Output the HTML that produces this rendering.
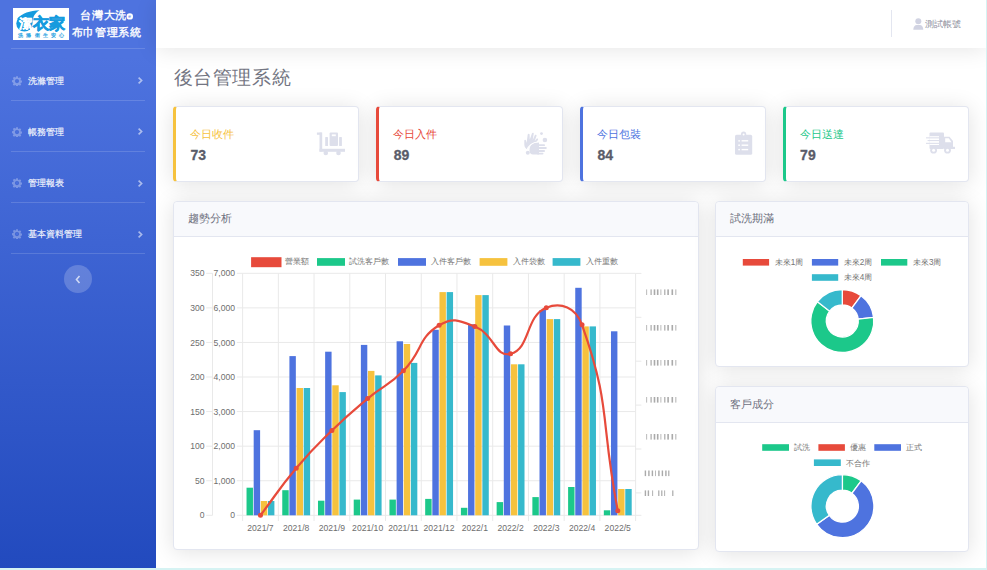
<!DOCTYPE html>
<html><head><meta charset="utf-8">
<style>
*{box-sizing:border-box;margin:0;padding:0}
html,body{width:987px;height:570px;overflow:hidden}
body{position:relative;background:#fff;font-family:"Liberation Sans",sans-serif;color:#5a5c69}
.abs{position:absolute}
#side{left:0;top:0;width:156px;height:568px;background:linear-gradient(180deg,#4e73df 10%,#224abe 100%)}
.hr{position:absolute;left:10.5px;width:134px;height:1px;background:rgba(255,255,255,.15)}
.mi{position:absolute;left:0;width:156px;height:20px;color:rgba(255,255,255,.85);font-size:9.4px;line-height:20px}
.mi .t{position:absolute;left:28.4px;top:0;-webkit-text-stroke:0.25px rgba(255,255,255,.8)}
.mi svg{position:absolute}
#top{left:156px;top:0;width:830px;height:48px;background:#fff;box-shadow:0 2px 22px 0 rgba(0,0,0,.1)}
.card{position:absolute;background:#fff;border:1px solid #e3e6f0;border-radius:4px;box-shadow:0 2px 22px 0 rgba(0,0,0,.12)}
.stat{top:105.6px;height:76.6px;width:186.4px}
.stat .lab{position:absolute;left:14.3px;top:20px;font-size:11px;line-height:14px}
.stat .num{position:absolute;left:14.5px;top:39.5px;font-size:14px;font-weight:bold;line-height:18px;color:#5a5c69;-webkit-text-stroke:0.3px #5a5c69}
.stat svg{position:absolute}
.ch{position:absolute;left:0;top:0;right:0;height:35.5px;background:#f8f9fc;border-bottom:1px solid #e3e6f0;border-radius:4px 4px 0 0}
.ch span{position:absolute;left:14px;top:9.5px;font-size:11px;line-height:14px;color:#6e707e}
#rb{right:0;top:0;width:1px;height:570px;background:#d6f3f3}
#bb{left:0;bottom:0;width:987px;height:2px;background:#d6f3f3}
svg text{font-family:"Liberation Sans",sans-serif}
.ax{font-size:8.6px;fill:#6e6e6e}
.lg{font-size:8.2px;fill:#747474}
.gb{font-size:7px;fill:#777;letter-spacing:0.4px}
</style></head><body>
<div id="side" class="abs">
  <!-- logo -->
  <div class="abs" style="left:13.2px;top:7.5px;width:55.5px;height:32.3px;background:#fff"></div>
  <svg class="abs" style="left:0;top:0" width="156" height="48" viewBox="0 0 156 48">
    <g fill="#169bde"><circle cx="24.4" cy="23.4" r="8.1"/><path d="M17.2,18.8 C22,13.2 30,10.8 39.5,10.3 C35,13 32.6,17 32.4,23 L24,24 Z"/></g>
    <text x="19" y="28.4" font-size="12.6" font-weight="bold" fill="#fff" stroke="#fff" stroke-width="0.3" style="font-family:'Liberation Sans',sans-serif">潔</text>
    <text x="32.8" y="28.9" font-size="16.4" font-weight="bold" fill="#169bde" stroke="#169bde" stroke-width="0.6" style="font-family:'Liberation Sans',sans-serif" textLength="32.4" lengthAdjust="spacingAndGlyphs">衣家</text>
    <text x="18.4" y="37.3" font-size="4.6" fill="#2aa3e2" stroke="#2aa3e2" stroke-width="0.2" letter-spacing="3.1" style="font-family:'Liberation Sans',sans-serif">洗滌衛生安心</text>
    <text x="80.4 92.0 103.6 115.2" y="18.8" font-size="11.2" fill="#fff" stroke="#fff" stroke-width="0.35" style="font-family:'Liberation Sans',sans-serif" >台灣大洗</text>
    <circle cx="129.8" cy="16.4" r="3.2" fill="#fff"/>
    <text x="128.2" y="18.2" font-size="4.8" fill="#4e73df" style="font-family:'Liberation Sans',sans-serif">e</text>
    <text x="71.6 83.25 94.9 106.55 118.2 129.85" y="36.2" font-size="11.2" fill="#fff" stroke="#fff" stroke-width="0.35" style="font-family:'Liberation Sans',sans-serif" >布巾管理系統</text>
  </svg>
  <div class="hr" style="top:48px"></div>
  <div class="mi" style="top:70.5px"><svg style="left:11.8px;top:5.2px" width="10" height="10" viewBox="0 0 16 16"><path fill="rgba(255,255,255,.3)" d="M8 4.6a3.4 3.4 0 1 0 0 6.8 3.4 3.4 0 0 0 0-6.8zM6.6.5h2.8l.4 2.1 1.2.6 1.8-1.2 2 2-1.2 1.8.5 1.2 2.1.4v2.8l-2.1.4-.5 1.2 1.2 1.8-2 2-1.8-1.2-1.2.5-.4 2.1H6.6l-.4-2.1-1.2-.5-1.8 1.2-2-2 1.2-1.8-.5-1.2L0 9.4V6.6l2.1-.4.5-1.2-1.2-1.8 2-2 1.8 1.2 1.2-.6z"/><circle cx="8" cy="8" r="2.2" fill="#4a6fdc"/></svg><span class="t">洗滌管理</span><svg style="left:136.5px;top:5.8px" width="7" height="9" viewBox="0 0 7 9"><path d="M1.6,1.6 L4.6,4.5 L1.6,7.4" fill="none" stroke="rgba(255,255,255,.55)" stroke-width="1.7"/></svg></div>
  <div class="hr" style="top:100px"></div>
  <div class="mi" style="top:121.5px"><svg style="left:11.8px;top:5.2px" width="10" height="10" viewBox="0 0 16 16"><path fill="rgba(255,255,255,.3)" d="M8 4.6a3.4 3.4 0 1 0 0 6.8 3.4 3.4 0 0 0 0-6.8zM6.6.5h2.8l.4 2.1 1.2.6 1.8-1.2 2 2-1.2 1.8.5 1.2 2.1.4v2.8l-2.1.4-.5 1.2 1.2 1.8-2 2-1.8-1.2-1.2.5-.4 2.1H6.6l-.4-2.1-1.2-.5-1.8 1.2-2-2 1.2-1.8-.5-1.2L0 9.4V6.6l2.1-.4.5-1.2-1.2-1.8 2-2 1.8 1.2 1.2-.6z"/><circle cx="8" cy="8" r="2.2" fill="#4a6fdc"/></svg><span class="t">帳務管理</span><svg style="left:136.5px;top:5.8px" width="7" height="9" viewBox="0 0 7 9"><path d="M1.6,1.6 L4.6,4.5 L1.6,7.4" fill="none" stroke="rgba(255,255,255,.55)" stroke-width="1.7"/></svg></div>
  <div class="hr" style="top:151.2px"></div>
  <div class="mi" style="top:172.8px"><svg style="left:11.8px;top:5.2px" width="10" height="10" viewBox="0 0 16 16"><path fill="rgba(255,255,255,.3)" d="M8 4.6a3.4 3.4 0 1 0 0 6.8 3.4 3.4 0 0 0 0-6.8zM6.6.5h2.8l.4 2.1 1.2.6 1.8-1.2 2 2-1.2 1.8.5 1.2 2.1.4v2.8l-2.1.4-.5 1.2 1.2 1.8-2 2-1.8-1.2-1.2.5-.4 2.1H6.6l-.4-2.1-1.2-.5-1.8 1.2-2-2 1.2-1.8-.5-1.2L0 9.4V6.6l2.1-.4.5-1.2-1.2-1.8 2-2 1.8 1.2 1.2-.6z"/><circle cx="8" cy="8" r="2.2" fill="#4a6fdc"/></svg><span class="t">管理報表</span><svg style="left:136.5px;top:5.8px" width="7" height="9" viewBox="0 0 7 9"><path d="M1.6,1.6 L4.6,4.5 L1.6,7.4" fill="none" stroke="rgba(255,255,255,.55)" stroke-width="1.7"/></svg></div>
  <div class="hr" style="top:201.8px"></div>
  <div class="mi" style="top:224px"><svg style="left:11.8px;top:5.2px" width="10" height="10" viewBox="0 0 16 16"><path fill="rgba(255,255,255,.3)" d="M8 4.6a3.4 3.4 0 1 0 0 6.8 3.4 3.4 0 0 0 0-6.8zM6.6.5h2.8l.4 2.1 1.2.6 1.8-1.2 2 2-1.2 1.8.5 1.2 2.1.4v2.8l-2.1.4-.5 1.2 1.2 1.8-2 2-1.8-1.2-1.2.5-.4 2.1H6.6l-.4-2.1-1.2-.5-1.8 1.2-2-2 1.2-1.8-.5-1.2L0 9.4V6.6l2.1-.4.5-1.2-1.2-1.8 2-2 1.8 1.2 1.2-.6z"/><circle cx="8" cy="8" r="2.2" fill="#4a6fdc"/></svg><span class="t">基本資料管理</span><svg style="left:136.5px;top:5.8px" width="7" height="9" viewBox="0 0 7 9"><path d="M1.6,1.6 L4.6,4.5 L1.6,7.4" fill="none" stroke="rgba(255,255,255,.55)" stroke-width="1.7"/></svg></div>
  <div class="hr" style="top:253.1px"></div>
  <div class="abs" style="left:63.8px;top:265px;width:28px;height:28px;border-radius:50%;background:rgba(255,255,255,.2)"></div>
  <svg class="abs" style="left:74px;top:275px" width="8" height="9" viewBox="0 0 8 9"><path d="M5.5,1 L2.5,4.5 L5.5,8" fill="none" stroke="rgba(255,255,255,.7)" stroke-width="1.6"/></svg>
</div>

<div id="top" class="abs">
  <div class="abs" style="left:735px;top:10px;width:1px;height:27px;background:#e3e6f0"></div>
  <svg class="abs" style="left:756.5px;top:17.5px" width="11" height="12" viewBox="0 0 11 12"><circle cx="5.3" cy="3.2" r="3" fill="#d1d3e2"/><path d="M0.3,11.8 C0.3,8.3 2,6.9 3.6,6.9 L7,6.9 C8.6,6.9 10.3,8.3 10.3,11.8 Z" fill="#d1d3e2"/></svg>
  <div class="abs" style="left:768.5px;top:18px;font-size:9px;line-height:12px;color:#8e909c">測試帳號</div>
</div>

<div class="abs" style="left:173.5px;top:64.5px;font-size:19.3px;line-height:26px;color:#737582;font-weight:300;letter-spacing:0.65px">後台管理系統</div>

<!-- stat cards -->
<div class="card stat" style="left:173px;border-left:3.2px solid #f6c23e">
  <div class="lab" style="color:#f6c23e">今日收件</div><div class="num">73</div>
  <svg style="left:140.2px;top:24px" width="32" height="28" viewBox="0 0 32 28">
    <g fill="#dddfeb">
    <rect x="0.9" y="1.5" width="4.8" height="2.3"/><rect x="3.5" y="1.5" width="2.7" height="19"/>
    <rect x="3.5" y="17.8" width="25.5" height="3"/>
    <circle cx="9.8" cy="22" r="2.3"/><circle cx="22.5" cy="22" r="2.3"/>
    <rect x="13.6" y="1.5" width="8.4" height="13.6" rx="1"/>
    <rect x="9.2" y="5.9" width="2.8" height="9.2" rx="0.6"/><rect x="23.1" y="5.9" width="2.8" height="9.2" rx="0.6"/>
    </g><rect x="15.8" y="3.4" width="4" height="1.8" fill="#fff"/>
  </svg>
</div>
<div class="card stat" style="left:376.2px;border-left:3.2px solid #e74a3b">
  <div class="lab" style="color:#e74a3b">今日入件</div><div class="num">89</div>
  <svg style="left:144px;top:25px" width="28" height="28" viewBox="0 0 28 28">
    <g fill="#dddfeb">
    <circle cx="18.5" cy="1.6" r="1.4"/><circle cx="21.9" cy="8" r="2.3"/><circle cx="4.8" cy="20.7" r="2"/>
    <path d="M1.3,8.5 C1.3,7.6 2.8,7.4 3,8.4 L3.6,11 L4.7,2.6 C4.8,1.5 6.6,1.5 6.6,2.6 L6.8,7.6 L8.9,1.5 C9.2,0.5 11,0.7 10.7,1.8 L9.7,7.9 L11.8,3.3 C12.3,2.4 13.9,2.9 13.5,3.9 L11.6,9.2 L13.6,6.8 C14.3,6.1 15.5,6.8 15,7.8 L13.5,10 C10,10.5 7,12.5 4.6,17.4 C2.6,16.8 1.3,14.8 1.3,12.5 Z"/>
    <path d="M6.5,18.4 C6.5,13.5 9.3,10.8 13.5,10.6 L16,10.6 L16,22.4 L10,22.4 C8,22.4 6.5,21 6.5,18.4 Z"/>
    <rect x="14" y="12.2" width="8" height="1.9" rx="0.9"/><rect x="14" y="15.1" width="9.8" height="1.9" rx="0.9"/>
    <rect x="14" y="18" width="8" height="1.9" rx="0.9"/><rect x="14" y="20.7" width="6.5" height="1.8" rx="0.9"/>
    </g><path d="M3.6,18.6 C5.5,13.5 9.5,10.4 15.5,9.8" fill="none" stroke="#fff" stroke-width="1.1"/>
  </svg>
</div>
<div class="card stat" style="left:579.9px;border-left:3.2px solid #4e73df">
  <div class="lab" style="color:#4e73df">今日包裝</div><div class="num">84</div>
  <svg style="left:151px;top:24.5px" width="22" height="28" viewBox="0 0 22 28">
    <g fill="#dddfeb"><rect x="1" y="3.8" width="17.2" height="20" rx="1.6"/><circle cx="9.6" cy="3.2" r="2.6"/></g>
    <circle cx="9.6" cy="3.4" r="1" fill="#fff"/>
    <g fill="#fff"><circle cx="5.1" cy="9.8" r="0.9"/><circle cx="5.1" cy="14.2" r="0.9"/><circle cx="5.1" cy="18.6" r="0.9"/>
    <rect x="7.6" y="9.1" width="6.6" height="1.4"/><rect x="7.6" y="13.5" width="6.6" height="1.4"/><rect x="7.6" y="17.9" width="6.6" height="1.4"/></g>
  </svg>
</div>
<div class="card stat" style="left:782.6px;border-left:3.2px solid #1cc88a">
  <div class="lab" style="color:#1cc88a">今日送達</div><div class="num">79</div>
  <svg style="left:140.6px;top:24.3px" width="34" height="28" viewBox="0 0 34 28">
    <g fill="#dddfeb">
    <rect x="3.5" y="1.5" width="14.5" height="16.5" rx="1"/>
    <path d="M18,5.8 L23.5,5.8 L27,10 L27,18 L18,18 Z"/>
    <rect x="26" y="15.8" width="3" height="2.2"/>
    <circle cx="7.6" cy="19.2" r="3.4"/><circle cx="21.5" cy="19.2" r="3.4"/>
    <rect x="0" y="6.3" width="12" height="1.1"/><rect x="1.6" y="9" width="10.5" height="1.1"/><rect x="0" y="11.8" width="9.5" height="1.1"/>
    </g>
    <g fill="#fff">
    <rect x="3.5" y="5.2" width="9.5" height="1.1"/><rect x="3.5" y="7.4" width="9.5" height="1.6"/><rect x="3.5" y="10.1" width="9.5" height="1.7"/><rect x="3.5" y="12.9" width="9.5" height="1.1"/>
    <path d="M19.2,7.3 L22.8,7.3 L25.5,11.3 L19.2,11.3 Z"/>
    <circle cx="7.6" cy="19.2" r="1.5"/><circle cx="21.5" cy="19.2" r="1.5"/>
    </g>
  </svg>
</div>

<!-- chart card -->
<div class="card" style="left:173px;top:200.5px;width:526px;height:349.1px"><div class="ch"><span>趨勢分析</span></div></div>
<div class="card" style="left:714.8px;top:200.5px;width:254px;height:166.1px"><div class="ch"><span style="left:14.5px">試洗期滿</span></div></div>
<div class="card" style="left:714.8px;top:386px;width:254px;height:166.1px"><div class="ch"><span style="left:14.5px">客戶成分</span></div></div>

<svg class="abs" style="left:0;top:0" width="987" height="570" viewBox="0 0 987 570">
<line x1="236.8" y1="515.30" x2="635.63" y2="515.30" stroke="#e9e9e9" stroke-width="1"/>
<line x1="206.2" y1="515.30" x2="212.6" y2="515.30" stroke="#e9e9e9" stroke-width="1"/>
<line x1="236.8" y1="480.73" x2="635.63" y2="480.73" stroke="#e9e9e9" stroke-width="1"/>
<line x1="206.2" y1="480.73" x2="212.6" y2="480.73" stroke="#e9e9e9" stroke-width="1"/>
<line x1="236.8" y1="446.16" x2="635.63" y2="446.16" stroke="#e9e9e9" stroke-width="1"/>
<line x1="206.2" y1="446.16" x2="212.6" y2="446.16" stroke="#e9e9e9" stroke-width="1"/>
<line x1="236.8" y1="411.59" x2="635.63" y2="411.59" stroke="#e9e9e9" stroke-width="1"/>
<line x1="206.2" y1="411.59" x2="212.6" y2="411.59" stroke="#e9e9e9" stroke-width="1"/>
<line x1="236.8" y1="377.02" x2="635.63" y2="377.02" stroke="#e9e9e9" stroke-width="1"/>
<line x1="206.2" y1="377.02" x2="212.6" y2="377.02" stroke="#e9e9e9" stroke-width="1"/>
<line x1="236.8" y1="342.45" x2="635.63" y2="342.45" stroke="#e9e9e9" stroke-width="1"/>
<line x1="206.2" y1="342.45" x2="212.6" y2="342.45" stroke="#e9e9e9" stroke-width="1"/>
<line x1="236.8" y1="307.88" x2="635.63" y2="307.88" stroke="#e9e9e9" stroke-width="1"/>
<line x1="206.2" y1="307.88" x2="212.6" y2="307.88" stroke="#e9e9e9" stroke-width="1"/>
<line x1="236.8" y1="273.31" x2="635.63" y2="273.31" stroke="#e9e9e9" stroke-width="1"/>
<line x1="206.2" y1="273.31" x2="212.6" y2="273.31" stroke="#e9e9e9" stroke-width="1"/>
<line x1="212.5" y1="273.31" x2="212.5" y2="515.30" stroke="#e9e9e9" stroke-width="1"/>
<line x1="242.60" y1="273.31" x2="242.60" y2="521" stroke="#e9e9e9" stroke-width="1"/>
<line x1="278.33" y1="273.31" x2="278.33" y2="521" stroke="#e9e9e9" stroke-width="1"/>
<line x1="314.06" y1="273.31" x2="314.06" y2="521" stroke="#e9e9e9" stroke-width="1"/>
<line x1="349.79" y1="273.31" x2="349.79" y2="521" stroke="#e9e9e9" stroke-width="1"/>
<line x1="385.52" y1="273.31" x2="385.52" y2="521" stroke="#e9e9e9" stroke-width="1"/>
<line x1="421.25" y1="273.31" x2="421.25" y2="521" stroke="#e9e9e9" stroke-width="1"/>
<line x1="456.98" y1="273.31" x2="456.98" y2="521" stroke="#e9e9e9" stroke-width="1"/>
<line x1="492.71" y1="273.31" x2="492.71" y2="521" stroke="#e9e9e9" stroke-width="1"/>
<line x1="528.44" y1="273.31" x2="528.44" y2="521" stroke="#e9e9e9" stroke-width="1"/>
<line x1="564.17" y1="273.31" x2="564.17" y2="521" stroke="#e9e9e9" stroke-width="1"/>
<line x1="599.90" y1="273.31" x2="599.90" y2="521" stroke="#e9e9e9" stroke-width="1"/>
<line x1="635.63" y1="273.31" x2="635.63" y2="521" stroke="#e9e9e9" stroke-width="1"/>
<line x1="635.63" y1="273.4" x2="641.4" y2="273.4" stroke="#e9e9e9" stroke-width="1"/>
<line x1="635.63" y1="317.3" x2="641.4" y2="317.3" stroke="#e9e9e9" stroke-width="1"/>
<line x1="635.63" y1="361.2" x2="641.4" y2="361.2" stroke="#e9e9e9" stroke-width="1"/>
<line x1="635.63" y1="405.1" x2="641.4" y2="405.1" stroke="#e9e9e9" stroke-width="1"/>
<line x1="635.63" y1="449.0" x2="641.4" y2="449.0" stroke="#e9e9e9" stroke-width="1"/>
<line x1="635.63" y1="492.9" x2="641.4" y2="492.9" stroke="#e9e9e9" stroke-width="1"/>
<line x1="635.63" y1="515.3" x2="641.4" y2="515.3" stroke="#e9e9e9" stroke-width="1"/>
<rect x="246.53" y="487.70" width="6.43" height="27.60" fill="#1cc88a"/>
<rect x="253.68" y="430.20" width="6.43" height="85.10" fill="#4e73df"/>
<rect x="260.82" y="501.00" width="6.43" height="14.30" fill="#f6c23e"/>
<rect x="267.97" y="501.00" width="6.43" height="14.30" fill="#36b9cc"/>
<rect x="282.26" y="490.20" width="6.43" height="25.10" fill="#1cc88a"/>
<rect x="289.41" y="356.10" width="6.43" height="159.20" fill="#4e73df"/>
<rect x="296.55" y="388.00" width="6.43" height="127.30" fill="#f6c23e"/>
<rect x="303.70" y="388.00" width="6.43" height="127.30" fill="#36b9cc"/>
<rect x="317.99" y="500.70" width="6.43" height="14.60" fill="#1cc88a"/>
<rect x="325.14" y="351.70" width="6.43" height="163.60" fill="#4e73df"/>
<rect x="332.28" y="385.30" width="6.43" height="130.00" fill="#f6c23e"/>
<rect x="339.43" y="392.10" width="6.43" height="123.20" fill="#36b9cc"/>
<rect x="353.72" y="499.60" width="6.43" height="15.70" fill="#1cc88a"/>
<rect x="360.87" y="344.90" width="6.43" height="170.40" fill="#4e73df"/>
<rect x="368.01" y="370.90" width="6.43" height="144.40" fill="#f6c23e"/>
<rect x="375.16" y="375.40" width="6.43" height="139.90" fill="#36b9cc"/>
<rect x="389.45" y="499.60" width="6.43" height="15.70" fill="#1cc88a"/>
<rect x="396.60" y="341.30" width="6.43" height="174.00" fill="#4e73df"/>
<rect x="403.74" y="344.00" width="6.43" height="171.30" fill="#f6c23e"/>
<rect x="410.89" y="362.90" width="6.43" height="152.40" fill="#36b9cc"/>
<rect x="425.18" y="498.90" width="6.43" height="16.40" fill="#1cc88a"/>
<rect x="432.33" y="329.80" width="6.43" height="185.50" fill="#4e73df"/>
<rect x="439.47" y="292.10" width="6.43" height="223.20" fill="#f6c23e"/>
<rect x="446.62" y="292.10" width="6.43" height="223.20" fill="#36b9cc"/>
<rect x="460.91" y="507.80" width="6.43" height="7.50" fill="#1cc88a"/>
<rect x="468.06" y="324.30" width="6.43" height="191.00" fill="#4e73df"/>
<rect x="475.20" y="295.10" width="6.43" height="220.20" fill="#f6c23e"/>
<rect x="482.35" y="295.10" width="6.43" height="220.20" fill="#36b9cc"/>
<rect x="496.64" y="502.10" width="6.43" height="13.20" fill="#1cc88a"/>
<rect x="503.79" y="325.50" width="6.43" height="189.80" fill="#4e73df"/>
<rect x="510.93" y="364.30" width="6.43" height="151.00" fill="#f6c23e"/>
<rect x="518.08" y="364.30" width="6.43" height="151.00" fill="#36b9cc"/>
<rect x="532.37" y="497.10" width="6.43" height="18.20" fill="#1cc88a"/>
<rect x="539.52" y="310.00" width="6.43" height="205.30" fill="#4e73df"/>
<rect x="546.66" y="319.10" width="6.43" height="196.20" fill="#f6c23e"/>
<rect x="553.81" y="319.10" width="6.43" height="196.20" fill="#36b9cc"/>
<rect x="568.10" y="487.00" width="6.43" height="28.30" fill="#1cc88a"/>
<rect x="575.25" y="287.80" width="6.43" height="227.50" fill="#4e73df"/>
<rect x="582.39" y="326.40" width="6.43" height="188.90" fill="#f6c23e"/>
<rect x="589.54" y="326.40" width="6.43" height="188.90" fill="#36b9cc"/>
<rect x="603.83" y="510.30" width="6.43" height="5.00" fill="#1cc88a"/>
<rect x="610.98" y="331.30" width="6.43" height="184.00" fill="#4e73df"/>
<rect x="618.12" y="489.00" width="6.43" height="26.30" fill="#f6c23e"/>
<rect x="625.27" y="489.00" width="6.43" height="26.30" fill="#36b9cc"/>
<path d="M260.46,515.30 C278.33,491.80 277.20,490.84 296.19,468.30 C312.93,448.44 313.32,448.64 331.92,430.50 C349.05,413.79 349.29,413.95 367.65,398.60 C385.02,384.10 387.70,386.89 403.38,370.80 C423.43,350.24 417.03,338.96 439.12,325.30 C452.76,316.86 459.01,320.28 474.84,326.60 C494.74,334.53 495.03,357.91 510.57,353.80 C530.76,348.46 525.03,316.34 546.30,307.70 C560.76,301.84 575.85,307.24 582.03,324.80 C611.58,408.74 599.90,417.75 617.76,510.70" fill="none" stroke="#e74a3b" stroke-width="2.2"/>
<circle cx="260.46" cy="515.30" r="2.5" fill="#e74a3b"/>
<circle cx="296.19" cy="468.30" r="2.5" fill="#e74a3b"/>
<circle cx="331.92" cy="430.50" r="2.5" fill="#e74a3b"/>
<circle cx="367.65" cy="398.60" r="2.5" fill="#e74a3b"/>
<circle cx="403.38" cy="370.80" r="2.5" fill="#e74a3b"/>
<circle cx="439.12" cy="325.30" r="2.5" fill="#e74a3b"/>
<circle cx="474.84" cy="326.60" r="2.5" fill="#e74a3b"/>
<circle cx="510.57" cy="353.80" r="2.5" fill="#e74a3b"/>
<circle cx="546.30" cy="307.70" r="2.5" fill="#e74a3b"/>
<circle cx="582.03" cy="324.80" r="2.5" fill="#e74a3b"/>
<circle cx="617.76" cy="510.70" r="2.5" fill="#e74a3b"/>
<text x="260.46" y="531" text-anchor="middle" class="ax">2021/7</text>
<text x="296.19" y="531" text-anchor="middle" class="ax">2021/8</text>
<text x="331.92" y="531" text-anchor="middle" class="ax">2021/9</text>
<text x="367.65" y="531" text-anchor="middle" class="ax">2021/10</text>
<text x="403.38" y="531" text-anchor="middle" class="ax">2021/11</text>
<text x="439.12" y="531" text-anchor="middle" class="ax">2021/12</text>
<text x="474.84" y="531" text-anchor="middle" class="ax">2022/1</text>
<text x="510.57" y="531" text-anchor="middle" class="ax">2022/2</text>
<text x="546.30" y="531" text-anchor="middle" class="ax">2022/3</text>
<text x="582.03" y="531" text-anchor="middle" class="ax">2022/4</text>
<text x="617.76" y="531" text-anchor="middle" class="ax">2022/5</text>
<text x="204.5" y="518.40" text-anchor="end" class="ax">0</text>
<text x="235" y="518.40" text-anchor="end" class="ax">0</text>
<text x="204.5" y="483.83" text-anchor="end" class="ax">50</text>
<text x="235" y="483.83" text-anchor="end" class="ax">1,000</text>
<text x="204.5" y="449.26" text-anchor="end" class="ax">100</text>
<text x="235" y="449.26" text-anchor="end" class="ax">2,000</text>
<text x="204.5" y="414.69" text-anchor="end" class="ax">150</text>
<text x="235" y="414.69" text-anchor="end" class="ax">3,000</text>
<text x="204.5" y="380.12" text-anchor="end" class="ax">200</text>
<text x="235" y="380.12" text-anchor="end" class="ax">4,000</text>
<text x="204.5" y="345.55" text-anchor="end" class="ax">250</text>
<text x="235" y="345.55" text-anchor="end" class="ax">5,000</text>
<text x="204.5" y="310.98" text-anchor="end" class="ax">300</text>
<text x="235" y="310.98" text-anchor="end" class="ax">6,000</text>
<text x="204.5" y="276.41" text-anchor="end" class="ax">350</text>
<text x="235" y="276.41" text-anchor="end" class="ax">7,000</text>
<rect x="646.3" y="289.4" width="0.8" height="5.6" fill="#aaa"/>
<rect x="650.5" y="289.4" width="1.2" height="5.6" fill="#aaa"/>
<rect x="653.7" y="289.4" width="1.6" height="5.6" fill="#aaa"/>
<rect x="656.9" y="289.4" width="1.6" height="5.6" fill="#aaa"/>
<rect x="660.5" y="289.4" width="0.8" height="5.6" fill="#aaa"/>
<rect x="664.2" y="289.4" width="1.2" height="5.6" fill="#aaa"/>
<rect x="667.3" y="289.4" width="1.6" height="5.6" fill="#aaa"/>
<rect x="671.5" y="289.4" width="1.6" height="5.6" fill="#aaa"/>
<rect x="675.4" y="289.4" width="0.9" height="5.6" fill="#aaa"/>
<rect x="646.3" y="325.0" width="0.8" height="5.6" fill="#aaa"/>
<rect x="650.5" y="325.0" width="1.2" height="5.6" fill="#aaa"/>
<rect x="653.7" y="325.0" width="1.6" height="5.6" fill="#aaa"/>
<rect x="656.9" y="325.0" width="1.6" height="5.6" fill="#aaa"/>
<rect x="660.5" y="325.0" width="0.8" height="5.6" fill="#aaa"/>
<rect x="664.2" y="325.0" width="1.2" height="5.6" fill="#aaa"/>
<rect x="667.3" y="325.0" width="1.6" height="5.6" fill="#aaa"/>
<rect x="671.5" y="325.0" width="1.6" height="5.6" fill="#aaa"/>
<rect x="675.4" y="325.0" width="0.9" height="5.6" fill="#aaa"/>
<rect x="646.3" y="360.0" width="0.8" height="5.6" fill="#aaa"/>
<rect x="650.5" y="360.0" width="1.2" height="5.6" fill="#aaa"/>
<rect x="653.7" y="360.0" width="1.6" height="5.6" fill="#aaa"/>
<rect x="656.9" y="360.0" width="1.6" height="5.6" fill="#aaa"/>
<rect x="660.5" y="360.0" width="0.8" height="5.6" fill="#aaa"/>
<rect x="664.2" y="360.0" width="1.2" height="5.6" fill="#aaa"/>
<rect x="667.3" y="360.0" width="1.6" height="5.6" fill="#aaa"/>
<rect x="671.5" y="360.0" width="1.6" height="5.6" fill="#aaa"/>
<rect x="675.4" y="360.0" width="0.9" height="5.6" fill="#aaa"/>
<rect x="646.3" y="397.0" width="0.8" height="5.6" fill="#aaa"/>
<rect x="650.5" y="397.0" width="1.2" height="5.6" fill="#aaa"/>
<rect x="653.7" y="397.0" width="1.6" height="5.6" fill="#aaa"/>
<rect x="656.9" y="397.0" width="1.6" height="5.6" fill="#aaa"/>
<rect x="660.5" y="397.0" width="0.8" height="5.6" fill="#aaa"/>
<rect x="664.2" y="397.0" width="1.2" height="5.6" fill="#aaa"/>
<rect x="667.3" y="397.0" width="1.6" height="5.6" fill="#aaa"/>
<rect x="671.5" y="397.0" width="1.6" height="5.6" fill="#aaa"/>
<rect x="675.4" y="397.0" width="0.9" height="5.6" fill="#aaa"/>
<rect x="646.3" y="434.0" width="0.8" height="5.6" fill="#aaa"/>
<rect x="650.5" y="434.0" width="1.2" height="5.6" fill="#aaa"/>
<rect x="653.7" y="434.0" width="1.6" height="5.6" fill="#aaa"/>
<rect x="656.9" y="434.0" width="1.6" height="5.6" fill="#aaa"/>
<rect x="660.5" y="434.0" width="0.8" height="5.6" fill="#aaa"/>
<rect x="664.2" y="434.0" width="1.2" height="5.6" fill="#aaa"/>
<rect x="667.3" y="434.0" width="1.6" height="5.6" fill="#aaa"/>
<rect x="671.5" y="434.0" width="1.6" height="5.6" fill="#aaa"/>
<rect x="675.4" y="434.0" width="0.9" height="5.6" fill="#aaa"/>
<rect x="644.7" y="470.5" width="1.4" height="5.6" fill="#aaa"/>
<rect x="648.2" y="470.5" width="1.4" height="5.6" fill="#aaa"/>
<rect x="651.7" y="470.5" width="1.4" height="5.6" fill="#aaa"/>
<rect x="655.0" y="470.5" width="0.8" height="5.6" fill="#aaa"/>
<rect x="658.2" y="470.5" width="1.4" height="5.6" fill="#aaa"/>
<rect x="661.7" y="470.5" width="1.4" height="5.6" fill="#aaa"/>
<rect x="665.2" y="470.5" width="1.4" height="5.6" fill="#aaa"/>
<rect x="668.2" y="470.5" width="1.2" height="5.6" fill="#aaa"/>
<rect x="644.7" y="490.4" width="1.4" height="5.6" fill="#aaa"/>
<rect x="647.7" y="490.4" width="1.4" height="5.6" fill="#aaa"/>
<rect x="652.2" y="490.4" width="0.9" height="5.6" fill="#aaa"/>
<rect x="658.2" y="490.4" width="1.2" height="5.6" fill="#aaa"/>
<rect x="661.2" y="490.4" width="1.2" height="5.6" fill="#aaa"/>
<rect x="664.2" y="490.4" width="0.9" height="5.6" fill="#aaa"/>
<rect x="672.2" y="490.4" width="1.2" height="5.6" fill="#aaa"/>
<rect x="251.1" y="257.2" width="30.4" height="10" fill="#e74a3b"/>
<text x="285.0" y="264.4" class="lg">營業額</text>
<rect x="317" y="258.1" width="28.0" height="7.7" fill="#1cc88a"/>
<text x="349.4" y="264.4" class="lg">試洗客戶數</text>
<rect x="398" y="258.1" width="28.0" height="7.7" fill="#4e73df"/>
<text x="431" y="264.4" class="lg">入件客戶數</text>
<rect x="479.6" y="258.1" width="27.8" height="7.7" fill="#f6c23e"/>
<text x="512.7" y="264.4" class="lg">入件袋數</text>
<rect x="552.6" y="258.1" width="27.8" height="7.7" fill="#36b9cc"/>
<text x="585.6" y="264.4" class="lg">入件重數</text>
<path d="M842.30,289.50 A31.5,31.5 0 0 1 861.05,295.69 L851.82,308.14 A16.0,16.0 0 0 0 842.30,305.00 Z" fill="#e74a3b" stroke="#fff" stroke-width="1.3"/>
<path d="M861.05,295.69 A31.5,31.5 0 0 1 873.60,317.42 L858.20,319.18 A16.0,16.0 0 0 0 851.82,308.14 Z" fill="#4e73df" stroke="#fff" stroke-width="1.3"/>
<path d="M873.60,317.42 A31.5,31.5 0 1 1 817.42,301.68 L829.66,311.19 A16.0,16.0 0 1 0 858.20,319.18 Z" fill="#1cc88a" stroke="#fff" stroke-width="1.3"/>
<path d="M817.42,301.68 A31.5,31.5 0 0 1 842.30,289.50 L842.30,305.00 A16.0,16.0 0 0 0 829.66,311.19 Z" fill="#36b9cc" stroke="#fff" stroke-width="1.3"/>
<path d="M842.40,474.60 A31.5,31.5 0 0 1 861.15,480.79 L851.92,493.24 A16.0,16.0 0 0 0 842.40,490.10 Z" fill="#1cc88a" stroke="#fff" stroke-width="1.3"/>
<path d="M861.15,480.79 A31.5,31.5 0 1 1 816.67,524.27 L829.33,515.33 A16.0,16.0 0 1 0 851.92,493.24 Z" fill="#4e73df" stroke="#fff" stroke-width="1.3"/>
<path d="M816.67,524.27 A31.5,31.5 0 0 1 842.40,474.60 L842.40,490.10 A16.0,16.0 0 0 0 829.33,515.33 Z" fill="#36b9cc" stroke="#fff" stroke-width="1.3"/>
<rect x="742.8" y="259" width="26.3" height="6.6" fill="#e74a3b"/>
<text x="774.7" y="265.2" class="lg">未來1周</text>
<rect x="811.9" y="259" width="26.3" height="6.6" fill="#4e73df"/>
<text x="843.8" y="265.2" class="lg">未來2周</text>
<rect x="881" y="259" width="26.3" height="6.6" fill="#1cc88a"/>
<text x="912.9" y="265.2" class="lg">未來3周</text>
<rect x="811.9" y="274.2" width="26.3" height="6.6" fill="#36b9cc"/>
<text x="843.8" y="280.4" class="lg">未來4周</text>
<rect x="762.2" y="444.2" width="26.8" height="6.6" fill="#1cc88a"/>
<text x="794.2" y="450.4" class="lg">試洗</text>
<rect x="818.4" y="444.2" width="26.5" height="6.6" fill="#e74a3b"/>
<text x="850.4" y="450.4" class="lg">優惠</text>
<rect x="874.3" y="444.2" width="26.7" height="6.6" fill="#4e73df"/>
<text x="906.1" y="450.4" class="lg">正式</text>
<rect x="813.9" y="459.4" width="26.9" height="6.6" fill="#36b9cc"/>
<text x="846.3" y="465.6" class="lg">不合作</text>
</svg>

<div id="rb" class="abs"></div>
<div id="bb" class="abs"></div>
</body></html>
